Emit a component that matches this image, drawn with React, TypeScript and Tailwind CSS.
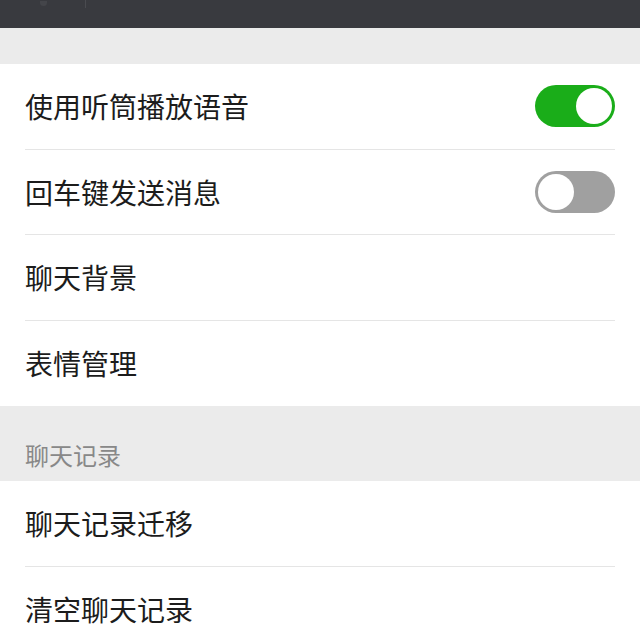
const font = "font-['Noto_Sans_CJK_SC','Noto_Sans',sans-serif]";

function Toggle({ on }: { on: boolean }) {
  return (
    <div
      className={
        on
          ? "flex h-[42px] w-[80px] items-center justify-end rounded-full bg-[#1aad19] p-[3px]"
          : "flex h-[42px] w-[80px] items-center justify-start rounded-full bg-[#a0a0a0] p-[3px]"
      }
    >
      <div className="h-[36px] w-[36px] rounded-full bg-white" />
    </div>
  );
}

function Row({ label, toggle, last }: { label: string; toggle?: boolean; last?: boolean }) {
  return (
    <div
      className={
        last
          ? "flex h-[85.5px] items-center justify-between"
          : "flex h-[85.5px] items-center justify-between border-b border-[#e5e5e5]"
      }
    >
      <span className="text-[28px] leading-none text-[#1c1c1c]">{label}</span>
      {toggle !== undefined && <Toggle on={toggle} />}
    </div>
  );
}

export default function App() {
  return (
    <div className={`h-[640px] w-[640px] overflow-hidden bg-white ${font}`}>
      <div className="flex h-[28px] items-start bg-[#393a3f] pl-[40px]">
        <div className="mt-[1px] h-[5px] w-[7px] rounded-b-full bg-[#44454a]" />
        <div className="ml-[38px] h-[8px] w-px bg-[#4a4b50]" />
      </div>
      <div className="h-[36px] bg-[#ebebeb]" />
      <div className="bg-white px-[25px]">
        <Row label="使用听筒播放语音" toggle={true} />
        <Row label="回车键发送消息" toggle={false} />
        <Row label="聊天背景" />
        <Row label="表情管理" last />
      </div>
      <div className="flex h-[75px] items-end bg-[#ebebeb] px-[25px] pb-[14px]">
        <span className="text-[24px] leading-none text-[#888888]">聊天记录</span>
      </div>
      <div className="bg-white px-[25px]">
        <Row label="聊天记录迁移" />
        <Row label="清空聊天记录" last />
      </div>
    </div>
  );
}
